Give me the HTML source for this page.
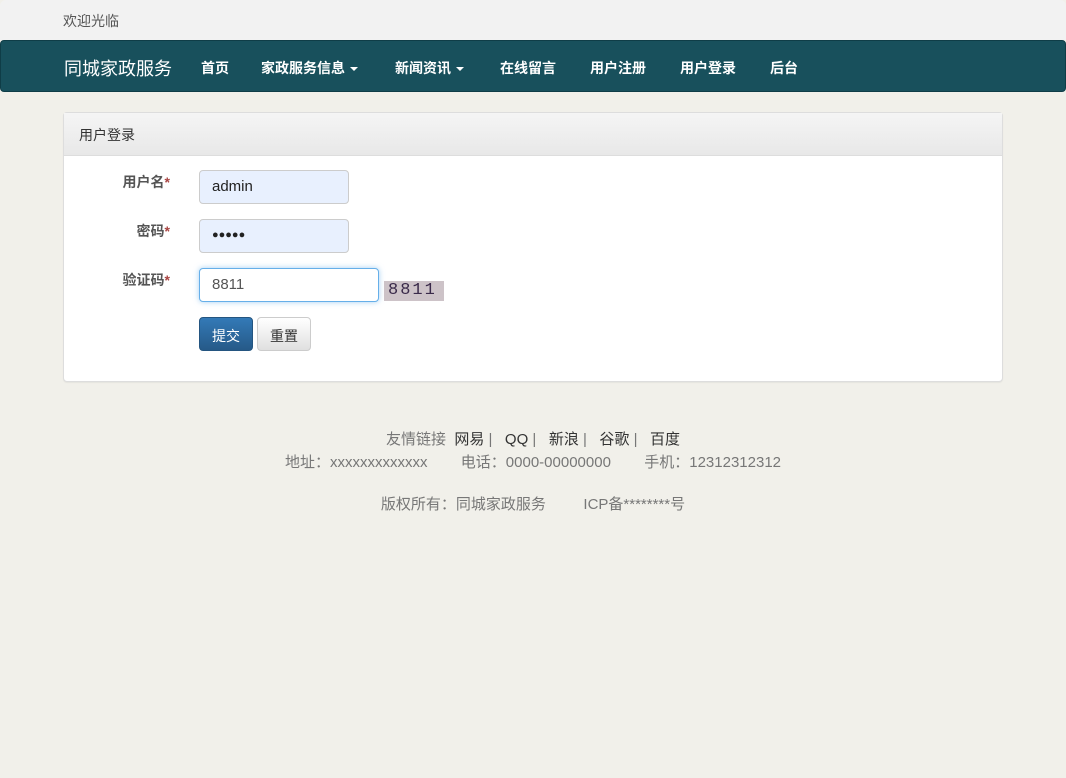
<!DOCTYPE html>
<html><head><meta charset="utf-8"><style>
*{box-sizing:border-box}
body{margin:0;width:1066px;height:778px;background:#f1f0ea;font-family:"Liberation Sans","Noto Sans CJK SC",sans-serif;font-size:14px;color:#333;overflow:hidden;position:relative}
.top{position:absolute;left:0;top:0;width:1066px;height:40px;background:#f2f2f2;border-radius:6px 6px 0 0}
.top span{position:absolute;left:63px;top:11px;color:#555;font-size:14px}
.nav{position:absolute;left:0;top:40px;width:1066px;height:52px;background:#18505c;border:1px solid #0f3d47;border-radius:4px}
.nav a{position:absolute;top:17px;color:#fff;font-size:14px;font-weight:600;text-decoration:none}
.nav .brand{left:63px;top:14px;font-size:18px;font-weight:normal}
.caret{display:inline-block;width:0;height:0;border-left:4px solid transparent;border-right:4px solid transparent;border-top:4px solid #fff;vertical-align:middle;margin-left:5px}
.panel{position:absolute;left:63px;top:112px;width:940px;height:270px;background:#fff;border:1px solid #ddd;border-radius:4px;box-shadow:0 1px 1px rgba(0,0,0,.05)}
.ph{height:43px;background:linear-gradient(#f5f5f5,#e8e8e8);border-bottom:1px solid #ddd;padding:12px 15px;font-size:14px;color:#333}
.lbl{position:absolute;width:106px;text-align:right;font-weight:bold;color:#555;font-size:14px}
.lbl b{color:#a94442}
.inp{position:absolute;left:135px;height:34px;border:1px solid #ccc;border-radius:4px;background:#e8f0fe;padding:7px 12px;font-size:15px;color:#222}
.btn{position:absolute;top:204px;height:34px;border-radius:4px;padding:8px 12px;font-size:14px}
.footer{position:absolute;left:0;width:1066px;text-align:center;color:#777;font-size:15px}
.footer a{color:#333}
</style></head><body>
<div class="top"><span>欢迎光临</span></div>
<div class="nav">
<a class="brand">同城家政服务</a>
<a style="left:200px">首页</a>
<a style="left:260px">家政服务信息<span class="caret"></span></a>
<a style="left:394px">新闻资讯<span class="caret"></span></a>
<a style="left:499px">在线留言</a>
<a style="left:589px">用户注册</a>
<a style="left:679px">用户登录</a>
<a style="left:769px">后台</a>
</div>
<div class="panel">
<div class="ph">用户登录</div>
<div class="lbl" style="top:59px">用户名<b>*</b></div>
<div class="inp" style="top:57px;width:150px">admin</div>
<div class="lbl" style="top:108px">密码<b>*</b></div>
<div class="inp" style="top:106px;width:150px;font-size:11px;padding-top:9px">●●●●●</div>
<div class="lbl" style="top:157px">验证码<b>*</b></div>
<div class="inp" style="top:155px;width:180px;background:#fff;border-color:#66afe9;box-shadow:0 0 6px rgba(102,175,233,.6);color:#555">8811</div>
<div style="position:absolute;left:320px;top:168px;width:60px;height:20px;background:#cdc3c8;font-family:'Liberation Mono',monospace;font-size:17px;letter-spacing:2px;color:#3a2a4a;padding-left:4px;line-height:20px">8811</div>
<div class="btn" style="left:135px;width:54px;background:linear-gradient(#337ab7,#265a88);color:#fff;border:1px solid #245580">提交</div>
<div class="btn" style="left:193px;width:54px;background:linear-gradient(#fff,#e0e0e0);border:1px solid #ccc">重置</div>
</div>
<div class="footer" style="top:428px">友情链接 &nbsp;<a>网易</a> | &nbsp;&nbsp;<a>QQ</a> | &nbsp;&nbsp;<a>新浪</a> | &nbsp;&nbsp;<a>谷歌</a> | &nbsp;&nbsp;<a>百度</a></div>
<div class="footer" style="top:451px">地址：xxxxxxxxxxxxx &nbsp;&nbsp;&nbsp;&nbsp;&nbsp;&nbsp; 电话：0000-00000000 &nbsp;&nbsp;&nbsp;&nbsp;&nbsp;&nbsp; 手机：12312312312</div>
<div class="footer" style="top:493px">版权所有：同城家政服务 &nbsp;&nbsp;&nbsp;&nbsp;&nbsp;&nbsp;&nbsp; ICP备********号</div>
</body></html>
